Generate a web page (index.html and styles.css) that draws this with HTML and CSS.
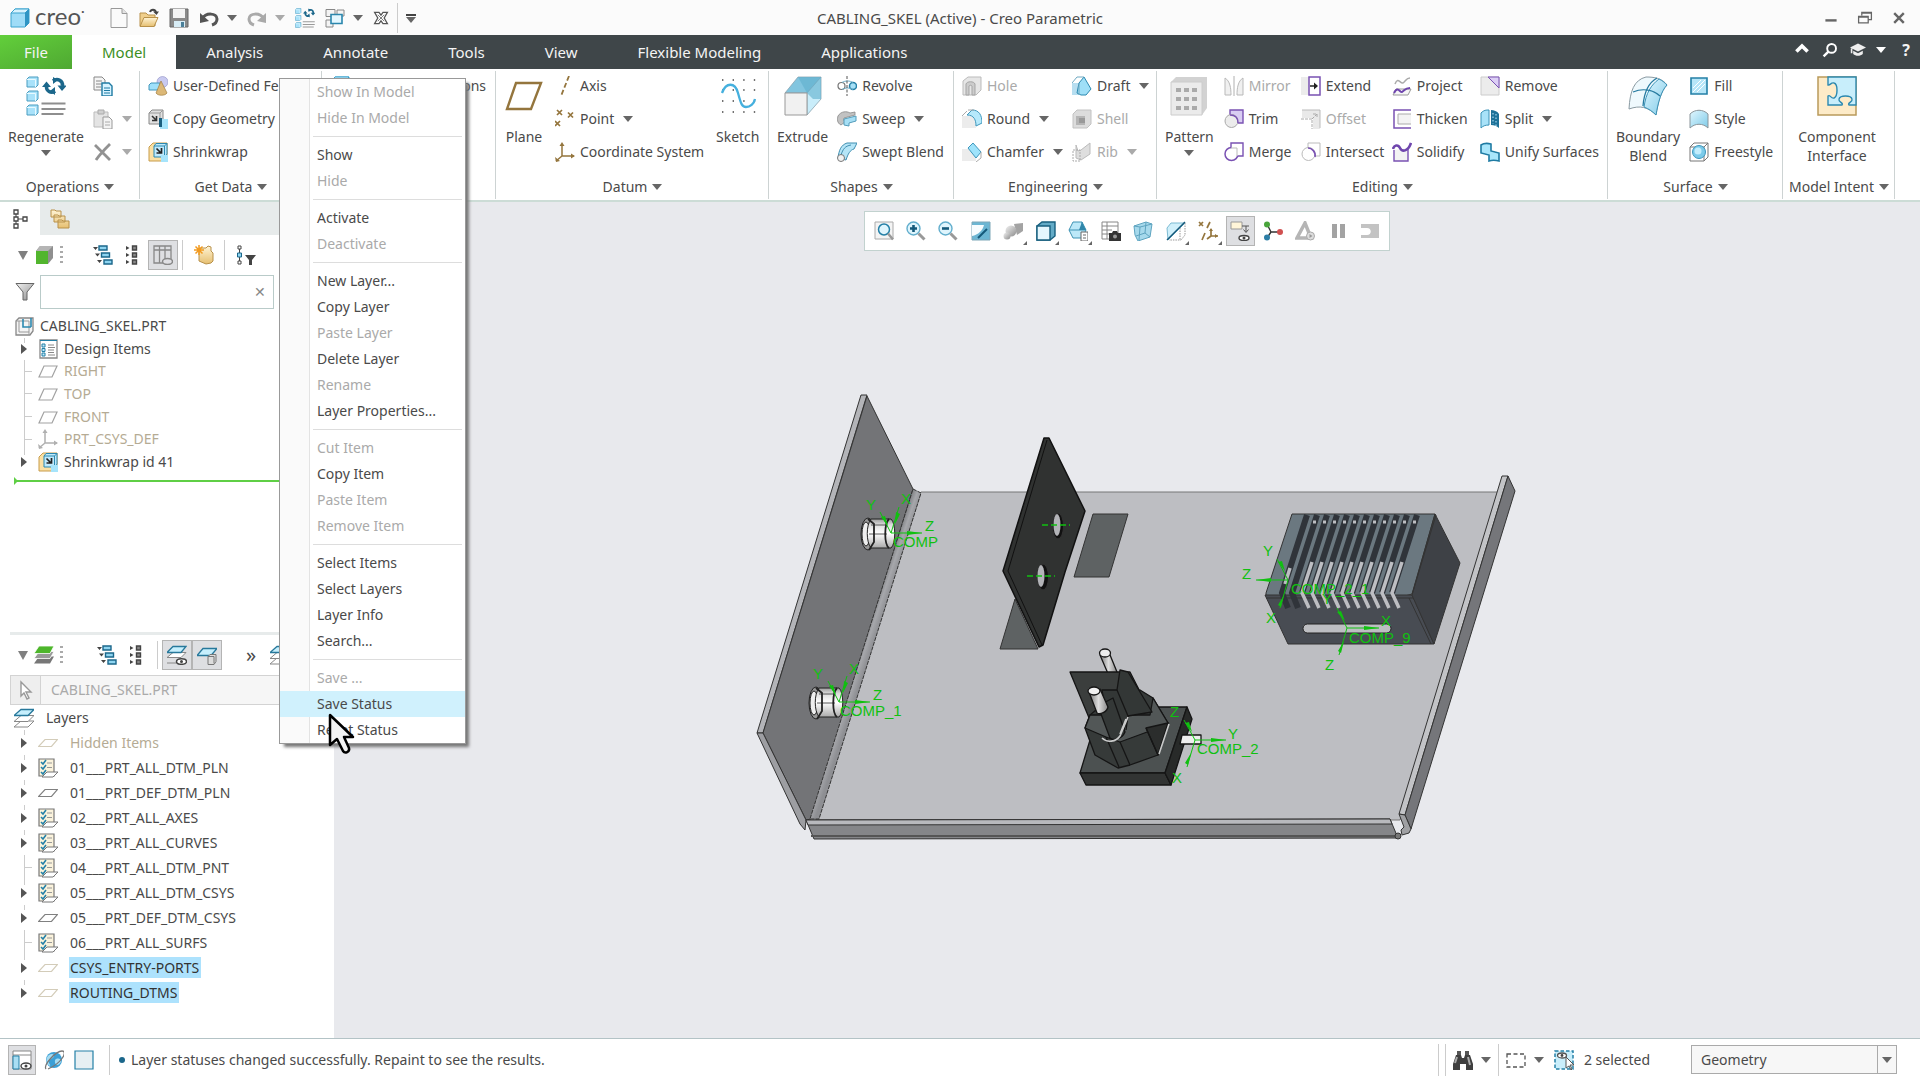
FILE: index.html
```html
<!DOCTYPE html>
<html lang="en">
<head>
<meta charset="utf-8">
<title>CABLING_SKEL (Active) - Creo Parametric</title>
<link rel="stylesheet" href="styles.css">
</head>
<body>
<svg class="sprite" aria-hidden="true">
<defs>
<linearGradient id="gb" x1="0" y1="0" x2="1" y2="1"><stop offset="0" stop-color="#e2f7ff"/><stop offset="1" stop-color="#7fcbe8"/></linearGradient>
<linearGradient id="gf" x1="0" y1="0" x2="0" y2="1"><stop offset="0" stop-color="#fff4d6"/><stop offset="1" stop-color="#e6bf70"/></linearGradient>
<linearGradient id="gg" x1="0" y1="0" x2="1" y2="1"><stop offset="0" stop-color="#f2f2f2"/><stop offset="1" stop-color="#8c8c8c"/></linearGradient>
<linearGradient id="gbend" gradientUnits="userSpaceOnUse" x1="858" y1="650" x2="870" y2="654"><stop offset="0" stop-color="#77787b"/><stop offset=".5" stop-color="#a6a7ab"/><stop offset="1" stop-color="#8e8f93"/></linearGradient>
<linearGradient id="gcyl" x1="0" y1="0" x2="0" y2="1"><stop offset="0" stop-color="#9b9b9b"/><stop offset=".2" stop-color="#ddd"/><stop offset=".5" stop-color="#fff"/><stop offset="1" stop-color="#aaa"/></linearGradient>
<linearGradient id="gpost" x1="0" y1="0" x2="1" y2="0"><stop offset="0" stop-color="#777"/><stop offset=".5" stop-color="#ddd"/><stop offset="1" stop-color="#888"/></linearGradient>
</defs>
<symbol id="cube" viewBox="0 0 20 20"><path d="M1 5 5 1h14v14l-4 4H1z" fill="#9fdcf7" stroke="#3aa3cf"/><path d="M1 5 5 1h14l-4 4z" fill="#d7f2fd" stroke="#3aa3cf"/><path d="M15 5l4-4v14l-4 4z" fill="#2f95c4"/></symbol>
<symbol id="new" viewBox="0 0 20 20"><path d="M2 .5h11l5 5v14H2z" fill="#fafafa" stroke="#999"/><path d="M13 .5v5h5" fill="#e3e3e3" stroke="#999"/></symbol>
<symbol id="open" viewBox="0 0 20 20"><path d="M1 18V5h6l2 2h7v11z" fill="#f0cf8c" stroke="#b8914a"/><path d="M1 18.500 5 9.500h14l-4 9z" fill="url(#gf)" stroke="#b8914a"/><path d="M11 4c1-3 5-3 6 0" fill="none" stroke="#444" stroke-width="2"/><path d="M14 3.500h6L17.500 7z" fill="#444"/></symbol>
<symbol id="save" viewBox="0 0 20 20"><path d="M1 1h18v18H1z" fill="#8a8a8a" stroke="#666"/><path d="M4 1h12v9H4z" fill="#f4f4f4"/><path d="M5 13h11v6H5z" fill="#d8edf6"/><path d="M12 14h3v5h-3z" fill="#4a7f99"/></symbol>
<symbol id="undo" viewBox="0 0 20 20"><path d="M3 11c4-7 15-6 15 0 0 3-2 5-5 6" fill="none" stroke="currentColor" stroke-width="3"/><path d="M1 5v10l9-2z" fill="currentColor"/></symbol>
<symbol id="redo" viewBox="0 0 20 20"><path d="M17 11C13 4 2 5 2 11c0 3 2 5 5 6" fill="none" stroke="currentColor" stroke-width="3"/><path d="M19 5v10l-9-2z" fill="currentColor"/></symbol>
<symbol id="regen" viewBox="0 0 40 40"><g fill="#a9e2fa" stroke="#4b9dc0"><path d="M1 3l2-2h9v8l-2 2H1zM1 17l2-2h9v8l-2 2H1zM1 31l2-2h9v8l-2 2H1z"/></g><path d="M1 3.500h8.500V11M1 17.500h8.500V25M1 31.500h8.500V39" fill="none" stroke="#e8faff"/><path d="M15.500 27.500h24M15.500 33h24M15.500 38h22" stroke="#8e8e8e" stroke-width="1.800"/><path d="M27 5c4-3 10-1 9.500 5M29 15c-4 3-9 0-8.500-5" fill="none" stroke="#1b678b" stroke-width="3.500"/><path d="M31.500 9.500H41L36 15zM16 11h9l-4.500-5.500zM29 19v-8l-5 4zM27 1v7l5-4z" fill="#1b678b"/></symbol>
<symbol id="wins" viewBox="0 0 20 20"><path d="M1 1.500h9v7H1zM12 2h7v6h-7zM1 12h7v7H1z" fill="#f4f4f4" stroke="#888"/><path d="M6 6.500h11v9H6z" fill="#e3f7ff" stroke="#2a86ad" stroke-width="1.600"/></symbol>
<symbol id="closew" viewBox="0 0 20 20"><path d="M2 3h5.500L10 6.500 12.500 3H18l-4 7 4 7h-5.500L10 13.500 7.500 17H2l4-7z" fill="#fff" stroke="#555" stroke-width="1.600"/><path d="M6 6l8 8M14 6l-8 8" stroke="#777" stroke-width="1.200"/></symbol>
<symbol id="copy" viewBox="0 0 20 20"><path d="M1 1h8l3 3v10H1z" fill="#f5f5f5" stroke="#888"/><path d="M3 5h6M3 8h6M3 11h5" stroke="#888"/><path d="M9 7h7l3 3v10H9z" fill="#d8f3ff" stroke="#1f7ba3" stroke-width="1.400"/><path d="M11 12h6M11 14.500h6M11 17h6" stroke="#1f7ba3"/></symbol>
<symbol id="paste" viewBox="0 0 20 20"><path d="M1 3h14v15H1z" fill="#e4e4e4" stroke="#bbb"/><path d="M5 1h6v4H5z" fill="#d0d0d0" stroke="#aaa"/><path d="M10 8h6l3 3v9h-9z" fill="#f3f3f3" stroke="#999"/><path d="M12 13h5M12 16h5" stroke="#aaa"/></symbol>
<symbol id="del" viewBox="0 0 20 20"><path d="M2 3 17 18M17 2C12 7 7 12 3 18" stroke="#929292" stroke-width="2.800" fill="none"/></symbol>
<symbol id="udf" viewBox="0 0 20 20"><circle cx="14.500" cy="6" r="5.500" fill="#c9caf0" stroke="#8d8fc4" stroke-width=".6"/><path d="M1 9l2-2h9v7H1z" fill="#9fe0fa" stroke="#4296bb"/><path d="M8 17 13 5l6 12c-2 3-9 3-11 0z" fill="#dcb877" stroke="#a07e3f" stroke-width=".7"/></symbol>
<symbol id="cgeo" viewBox="0 0 20 20"><path d="M1 4 4 1h11v11l-3 3H1z" fill="#e1e1e1" stroke="#888"/><path d="M1 4h11v11M12 4l3-3" fill="none" stroke="#999"/><path d="M4 7l4 4M8.500 7v4.500H4" stroke="#333" stroke-width="1.600" fill="none"/><path d="M12 10h8v10h-8z" fill="#a6e4fb"/><path d="M11 9h3v9h-3z" fill="#1b5f7f"/></symbol>
<symbol id="shrink" viewBox="0 0 20 20"><path d="M1 5 5 1h14v14l-3 4H1z" fill="#fae0a4" stroke="#c89c4b"/><path d="M6 4 8 1.500h11V12l-2 3H6z" fill="#bfe9fb" stroke="#2b89b0"/><path d="M6 4h10.500v11M16.500 4 19 1.500" fill="none" stroke="#2b89b0"/><path d="M8.500 6.500l4 4M13.500 6v5H8.500" stroke="#222" stroke-width="1.700" fill="none"/><path d="M13 13h7v7h-7z" fill="#a6e4fb"/></symbol>
<symbol id="plane" viewBox="0 0 40 40"><path d="M12 7h25L27 33H3z" fill="none" stroke="#94753d" stroke-width="2.400"/></symbol>
<symbol id="axis" viewBox="0 0 20 20"><path d="M14 0 6 20" stroke="#94753d" stroke-width="1.800" stroke-dasharray="5 2.500"/></symbol>
<symbol id="point" viewBox="0 0 20 20"><path d="M2 1l5 5M7 1 2 6M13 3.500l5 5M18 3.500l-5 5M0 12l5 5M5 12l-5 5" stroke="#94753d" stroke-width="1.700"/></symbol>
<symbol id="csys" viewBox="0 0 20 20"><path d="M7 2v12h12M7 14l-6 5" stroke="currentColor" stroke-width="1.500" fill="none"/><path d="M4.500 4 7 0l2.500 4zM16 11.500l4 2.500-4 2.500zM0 15l1 5 4-1z" fill="currentColor"/></symbol>
<symbol id="sketch" viewBox="0 0 40 40"><path d="M4 4h34M4 14h34M4 25h34M4 36h34" stroke="#444" stroke-width="1.400" stroke-dasharray="1.400 9.200"/><path d="M4 17C8 6 17 6 20 17s4 14 8 14 8-3 9-8" fill="none" stroke="#45b0de" stroke-width="2.300"/></symbol>
<symbol id="extrude" viewBox="0 0 40 40"><path d="M2 17 15 1h23L24 17z" fill="#82c5df" stroke="#8aa5b1" stroke-width=".8"/><path d="M24 17 38 1v22L24 39z" fill="#c9edfa" stroke="#8aa5b1" stroke-width=".8"/><path d="M15 1h23v22H30L24 17z" fill="#5fafcd" opacity=".6"/><path d="M2 17h22v22H2z" fill="#f1f1f1" stroke="#999"/></symbol>
<symbol id="revolve" viewBox="0 0 20 20"><circle cx="4.500" cy="10" r="3.500" fill="#fff" stroke="#777" stroke-width="1.200"/><circle cx="16" cy="10" r="3.500" fill="#a6e0f7" stroke="#2580a8" stroke-width="1.500"/><path d="M5 6.500c3-2 8-2 11 0M5 13.500c3-2 8-2 11 0" fill="none" stroke="#6dacc7"/><path d="M10 0v20" stroke="#555" stroke-dasharray="3 1.500"/></symbol>
<symbol id="sweep" viewBox="0 0 20 20"><path d="M1 7c3-5 9-5 12-3l5-1v3L7 9c-1 2 0 3 1 4l-4 3C0 14 0 10 1 7z" fill="#c2c2c2" stroke="#888" stroke-width=".8"/><path d="M7 10l12-3v5l-7 2v3l-5-1z" fill="#a6dff5" stroke="#549cba"/></symbol>
<symbol id="sblend" viewBox="0 0 20 20"><path d="M1 16C2 8 4 3 10 1h10L17 7c-4 1-6 5-8 11z" fill="#b5e5f7" stroke="#3f8eb0"/><path d="M4 13C6 7 8 4 14 3" stroke="#3f8eb0" fill="none"/><circle cx="4" cy="16" r="3.500" fill="#f2f2f2" stroke="#777"/></symbol>
<symbol id="hole" viewBox="0 0 20 20"><path d="M1 5 6 1h13v13l-5 5H1z" fill="#e6e6e6" stroke="#bbb"/><path d="M4 19V8c1-3 8-3 9 0v11h-3v-9c-1-1-2-1-3 0v9z" fill="#ccc" stroke="#a5a5a5"/></symbol>
<symbol id="round" viewBox="0 0 20 20"><path d="M0 7h8c4 1 6 5 6 12H0z" fill="#ececec"/><path d="M5 6c7 0 9 5 9 11l6-3C20 6 17 1 10 1z" fill="#b6e9fb" stroke="#3f97bc"/><path d="M6 1h6M0 7l5-5" stroke="#aaa"/></symbol>
<symbol id="chamfer" viewBox="0 0 20 20"><path d="M0 7h7l7 8v4H0z" fill="#ececec"/><path d="M6 6l5-5 8 9-5 6z" fill="#9fe3fb" stroke="#3f97bc"/><path d="M19 10v6l-5 4" stroke="#aaa" fill="none"/></symbol>
<symbol id="draft" viewBox="0 0 20 20"><path d="M0 7h7v12H0z" fill="#b7def0"/><path d="M7 7 12 1l7 12-5 6H9L5 17z" fill="#9fdff7" stroke="#2b89b0"/><path d="M0 7 5 1h7M7 7v12" stroke="#6fa9c1" fill="none"/></symbol>
<symbol id="shell" viewBox="0 0 20 20"><path d="M1 5 5 1h14v14l-4 4H1z" fill="#dcdcdc" stroke="#c2c2c2"/><path d="M4 7h9v9H4z" fill="#b5b5b5"/><path d="M7 9h6v5H7z" fill="#999"/></symbol>
<symbol id="rib" viewBox="0 0 20 20"><path d="M4 3v13l5 2 9-6V1l-9 7-3 1z" fill="#dedede" stroke="#bbb"/><path d="M1 8h7v11H1z" fill="none" stroke="#aaa" stroke-dasharray="2 1"/></symbol>
<symbol id="pattern" viewBox="0 0 40 40"><path d="M2 6 7 1h31v31l-5 7H2z" fill="#d2d2d2"/><path d="M2 6h31v33H2z" fill="#ebebeb" stroke="#ccc"/><g fill="#aaa"><path d="M7 12h5v4H7zM15 12h5v4h-5zM23 12h5v4h-5zM7 21h5v4H7zM15 21h5v4h-5zM23 21h5v4h-5zM7 30h5v4H7zM15 30h5v4h-5zM23 30h5v4h-5z"/></g></symbol>
<symbol id="mirror" viewBox="0 0 20 20"><path d="M1 2c5 3 6 10 6 17H1zM19 2c-5 3-6 10-6 17h6z" fill="#f0f0f0" stroke="#b9b9b9"/><path d="M10 0v20" stroke="#b0b0b0"/></symbol>
<symbol id="trim" viewBox="0 0 20 20"><path d="M6 1h13v13h-5L6 6z" fill="#d9cdf3" stroke="#7a52b3" stroke-width="1.400"/><circle cx="7.500" cy="12" r="6.500" fill="#ececec" stroke="#aaa"/><path d="M6 6c5 0 8 3 8 8" fill="none" stroke="#7a52b3" stroke-width="1.400"/></symbol>
<symbol id="merge" viewBox="0 0 20 20"><circle cx="7.500" cy="12" r="6.500" fill="#fff" stroke="#7a52b3" stroke-width="1.500"/><path d="M7 6V1h12v13h-5" fill="#fff" stroke="#7a52b3" stroke-width="1.400"/><path d="M7 6h6v8" stroke="#bbb" fill="none"/></symbol>
<symbol id="extend" viewBox="0 0 20 20"><path d="M0 1h10v18H0z" fill="#ececec"/><path d="M8 1h11v18H8z" fill="#fff" stroke="#7a52b3" stroke-width="1.500"/><path d="M9 10h6" stroke="#222" stroke-width="1.500"/><path d="M13 6.500 17 10l-4 3.500z" fill="#222"/></symbol>
<symbol id="offset" viewBox="0 0 20 20"><path d="M1 1h18v19H12V9H1z" fill="#e9e9e9"/><path d="M1 1h18v18" fill="none" stroke="#bbb"/><path d="M0 10h11v10M11 10l5-5M12 5h4v4" fill="none" stroke="#aaa" stroke-dasharray="3 1"/></symbol>
<symbol id="intersect" viewBox="0 0 20 20"><path d="M7 6V1h12v13h-5" fill="none" stroke="#bbb"/><circle cx="7.500" cy="12" r="6.500" fill="none" stroke="#bbb"/><path d="M7 6c4 0 8 4 7 9" fill="none" stroke="#7a52b3" stroke-width="1.600"/></symbol>
<symbol id="project" viewBox="0 0 20 20"><path d="M3 8c3-8 5 0 8-1 3-2 3-5 7-5" fill="none" stroke="#aaa" stroke-width="1.500"/><path d="M4 13h15l-3 6H1z" fill="#f6f6f6" stroke="#999"/><path d="M2 17c4-8 6 0 8-1 3-2 3-4 8-4" fill="none" stroke="#6f46ad" stroke-width="2"/></symbol>
<symbol id="thicken" viewBox="0 0 20 20"><path d="M19 1H2v18h17" fill="none" stroke="#7a52b3" stroke-width="1.500"/><path d="M19 5H6v10h13" fill="#f3f3f3" stroke="#aaa"/></symbol>
<symbol id="solidify" viewBox="0 0 20 20"><path d="M2 8v11h14V6" fill="#f3f3f3" stroke="#7a52b3" stroke-width="1.400"/><path d="M1 7c1-4 5-5 7-1s8 4 11-5" fill="none" stroke="#6f46ad" stroke-width="2.600"/></symbol>
<symbol id="remove" viewBox="0 0 20 20"><path d="M1 1h18v18H1z" fill="#ececec" stroke="#ccc"/><path d="M8 1h11v11z" fill="#dccff5" stroke="#7a52b3"/></symbol>
<symbol id="split" viewBox="0 0 20 20"><path d="M1 4c3-3 5-3 8-3v15c-4 0-6 1-8 3z" fill="#a9e2f8" stroke="#3a92b7"/><path d="M11 1c3 0 6 1 8 4v14c-2-2-5-3-8-3z" fill="#1d7198"/><path d="M13 4v11M16 5v12" stroke="#bdeaff" stroke-dasharray="1.500 2"/></symbol>
<symbol id="unify" viewBox="0 0 20 20"><path d="M1 3c3-2 6-2 10-1v7l8 2v8c-4-1-7-1-10 0v-6l-8-2z" fill="#a9e6fb" stroke="#1f7ba3" stroke-width="1.600"/></symbol>
<symbol id="boundary" viewBox="0 0 40 40"><path d="M1 33C2 15 6 4 18 1c8 0 16 1 21 8-6 6-9 18-11 30C20 31 12 29 1 33z" fill="#eff9fd" stroke="#8a9aa2"/><path d="M31 3c4 2 6 4 8 6-6 6-9 18-11 30-4-4-7-6-12-8C18 17 23 9 31 3z" fill="url(#gb)" stroke="#3a92b7"/><path d="M5 16c10-4 20-2 27 4M15 30C16 17 20 7 29 2" fill="none" stroke="#277ba0" stroke-width="1.300"/></symbol>
<symbol id="fill" viewBox="0 0 20 20"><path d="M2 2h16v16H2z" fill="#b7e6f8" stroke="#2480a7" stroke-width="1.600"/><path d="M4 12l8-8M4 16 16 4M8 16l8-8" stroke="#fff"/></symbol>
<symbol id="style" viewBox="0 0 20 20"><path d="M1 5C6 0 14 0 19 5v14c-5-5-13-5-18 0z" fill="url(#gb)" stroke="#8b959a"/></symbol>
<symbol id="freestyle" viewBox="0 0 20 20"><path d="M1 5h14v14H1zM5 1h14v14M1 5l4-4M15 5l4-4M15 19l4-4" fill="none" stroke="#777"/><circle cx="10" cy="10" r="6.500" fill="#7ccbea" stroke="#3b97bd"/><circle cx="9" cy="9" r="3.500" fill="#c2edfc"/></symbol>
<symbol id="compif" viewBox="0 0 40 40"><path d="M1 1h38v38H1z" fill="#fdebc8" stroke="#b99a5b" stroke-width="1.500"/><path d="M11 1h28v28h-7c-2-2 4-3 3-6-1-4-12-4-13 0-1 3 5 4 3 6H11V20c2-2 3 3 6 2 4-2 4-14 0-15-3-1-4 3-6 2z" fill="#c8eefb" stroke="#2c89b0" stroke-width="1.400"/></symbol>
<symbol id="tree" viewBox="0 0 20 20"><path d="M4 2v16M4 10h10" stroke="#444"/><path d="M2 1h4v4H2zM2 8h4v4H2zM2 15h4v4H2zM11 8h4v4h-4z" fill="#fff" stroke="#444" stroke-width="1.300"/></symbol>
<symbol id="folders" viewBox="0 0 20 20"><g fill="url(#gf)" stroke="#b8914a"><path d="M1 8V1h4l1 1h5v6zM4 13V6h4l1 1h6v6zM8 19v-8h4l1 1h6v7z"/></g></symbol>
<symbol id="gcube" viewBox="0 0 20 20"><path d="M2 6 6 1h13v12l-5 6z" fill="#8f8f8f"/><path d="M2 6h12L19 1H6z" fill="#b5b5b5"/><path d="M2 6h12v13H2z" fill="#52b52e"/></symbol>
<symbol id="expand" viewBox="0 0 20 20"><path d="M0 2h5L2.500 5zM2 8.500h5L4.500 11.500zM4 15h5l-2.500 3z" fill="#444"/><path d="M6 1h8v4H6zM8.500 8h8v4h-8zM11 15h8v4h-8z" fill="#8ed4f0" stroke="#1b678b" stroke-width="1.400"/></symbol>
<symbol id="collapse" viewBox="0 0 20 20"><path d="M4 1l3.500 2L4 5zM4 8l3.500 2L4 12zM4 15l3.500 2L4 19z" fill="#444"/><path d="M10.500 1h4v4h-4zM10.500 8h4v4h-4zM10.500 15h4v4h-4z" fill="#888" stroke="#444" stroke-width="1.400"/></symbol>
<symbol id="cols" viewBox="0 0 20 20"><path d="M1 1h17v17H1zM1 5h17M6.500 1v17M12 1v17" fill="none" stroke="#888" stroke-width="1.300"/><ellipse cx="14.500" cy="16.500" rx="5" ry="3" fill="#e0e0e4" stroke="#888" stroke-width="1.500"/></symbol>
<symbol id="newf" viewBox="0 0 20 20"><path d="M5 3h7l2-2 3 1v4l2 2v8l-2 2-5 1-7-3z" fill="url(#gf)" stroke="#b8914a"/><path d="M5 0v10M0 5h10M1.500 1.500l7 7M8.500 1.500l-7 7" stroke="#f29a1f" stroke-width="1.500"/></symbol>
<symbol id="tfilter" viewBox="0 0 20 20"><path d="M3.500 1v18" stroke="#444"/><path d="M2 1h3v3H2zM2 16h3v3H2z" fill="#fff" stroke="#444"/><path d="M1.500 8h4v4h-4z" fill="#8ed4f0" stroke="#1b678b"/><path d="M9 10h11l-4 5v5h-3v-5z" fill="#444"/></symbol>
<symbol id="funnel" viewBox="0 0 20 20"><path d="M1 1.500h18L12 10v8H8v-8z" fill="url(#gg)" stroke="#666"/></symbol>
<symbol id="part" viewBox="0 0 20 20"><path d="M2 5 5 2h14v13l-3 4H2z" fill="#f4f4f4" stroke="#888" stroke-width="1.300"/><path d="M2 5h13v14M5 5v11h10" fill="none" stroke="#999"/><path d="M9 3v8h8M17 2v9" fill="none" stroke="#2c89b0" stroke-width="1.600"/></symbol>
<symbol id="design" viewBox="0 0 20 20"><path d="M2 1h17v18H2z" fill="#fff" stroke="#888" stroke-width="1.300"/><path d="M4 5h3v3H4zM4 9.500h3v3H4zM4 14h3v3H4z" fill="#bfe9fb" stroke="#2480a7"/><path d="M10 6h6M10 8.500h7M10 11h6M10 13.500h6M10 16h7" stroke="#888"/><path d="M2 1.500h17" stroke="#2480a7"/></symbol>
<symbol id="pl" viewBox="0 0 20 20"><path d="M6 5h13l-5 11H1z" fill="none" stroke="#a2a2a2" stroke-width="1.200"/></symbol>
<symbol id="lay" viewBox="0 0 20 20"><path d="M7 6.500h12.500l-6 7H.5z" fill="#fff" stroke="currentColor" stroke-width="1.200"/></symbol>
<symbol id="rule" viewBox="0 0 20 20"><path d="M1 1h15v17H1z" fill="#fbf3dc" stroke="#777" stroke-width="1.200"/><path d="M3 4l2 2 3-4M3 9l2 2 3-4M3 14l2 2 3-4" fill="none" stroke="#2480a7" stroke-width="1.600"/><path d="M9 5h5M9 9.500h5" stroke="#999"/><path d="M9 14h11l-5 5H4z" fill="#fff" stroke="#777"/></symbol>
<symbol id="layers" viewBox="0 0 20 20"><path d="M7 13h13l-6 6H0z" fill="#fff" stroke="#888"/><path d="M7 7.500h13l-6 6H0z" fill="#fff" stroke="#888"/><path d="M7 1.500h13l-6 6H0z" fill="#c6effd" stroke="#27789b" stroke-width="1.300"/></symbol>
<symbol id="glayers" viewBox="0 0 20 20"><path d="M5 11.500h15l-4 7H0z" fill="#777"/><path d="M5 6.500h15l-4 7H0z" fill="#999" stroke="#fff" stroke-width=".8"/><path d="M5 1h15l-4 7.500H0z" fill="#4db62b" stroke="#fff" stroke-width=".8"/></symbol>
<symbol id="layeye" viewBox="0 0 20 20"><path d="M6 7.500h13l-5 5H0zM0 18h9" fill="#fff" stroke="#888"/><path d="M6 1.500h13l-5 6H0z" fill="#c6effd" stroke="#27789b" stroke-width="1.300"/><ellipse cx="14.500" cy="16.500" rx="5" ry="2.800" fill="#fff" stroke="#444" stroke-width="1.500"/><circle cx="14.500" cy="16.500" r="1.500" fill="#444"/></symbol>
<symbol id="laybox" viewBox="0 0 20 20"><path d="M6 3.500h14l-6 7H0z" fill="#c6effd" stroke="#27789b" stroke-width="1.300"/><path d="M11 11.500l2-2h6v7l-2 3h-6zM11 11.500h6v7" fill="#ddd" stroke="#777"/></symbol>
<symbol id="arrow" viewBox="0 0 20 20"><path d="M6 2v14l3-3 3 6 2-1-3-6h5z" fill="#fff" stroke="#999" stroke-width="1.400"/></symbol>
<symbol id="refit" viewBox="0 0 20 20"><path d="M1 1h18v17H1z" fill="#f4f4f4" stroke="#aaa"/><circle cx="10" cy="8.500" r="5.500" fill="#dff5fd" stroke="#2480a7" stroke-width="1.500"/><path d="M14 12.500l5 6" stroke="#999" stroke-width="2.500"/></symbol>
<symbol id="zin" viewBox="0 0 20 20"><circle cx="7.500" cy="7.500" r="6.500" fill="#dff5fd" stroke="#62aecd" stroke-width="1.400"/><path d="M7.500 4v7M4 7.500h7" stroke="#155a7b" stroke-width="2.600"/><path d="M12.500 12.500l6 6" stroke="#999" stroke-width="3"/></symbol>
<symbol id="zout" viewBox="0 0 20 20"><circle cx="7.500" cy="7.500" r="6.500" fill="#dff5fd" stroke="#62aecd" stroke-width="1.400"/><path d="M4 7.500h7" stroke="#155a7b" stroke-width="2.600"/><path d="M12.500 12.500l6 6" stroke="#999" stroke-width="3"/></symbol>
<symbol id="repaint" viewBox="0 0 20 20"><path d="M1 1h18v18H1z" fill="#6cb6d3" stroke="#7ea7b8"/><path d="M1 4h12c-1 5-6 10-12 11z" fill="#f7fcfe"/><path d="M7 17 16 8" stroke="#15597a" stroke-width="2"/></symbol>
<symbol id="shade" viewBox="0 0 20 20"><path d="M11 3l9-1v8l-6 4z" fill="#a3a3a3"/><circle cx="8" cy="10" r="5.500" fill="url(#gg)"/><circle cx="4" cy="15" r="3.500" fill="url(#gg)"/></symbol>
<symbol id="wire" viewBox="0 0 20 20"><path d="M1 5 6 1h13v14l-5 4H1z" fill="#63abc7" stroke="#18607f" stroke-width="1.400"/><path d="M1 5h13v14H1z" fill="#e5f7fe" stroke="#18607f" stroke-width="1.400"/></symbol>
<symbol id="views" viewBox="0 0 20 20"><path d="M5 1h9l4 8-4 8H5L1 9z" fill="#bce8f8" stroke="#3f93b4"/><path d="M1 9h17M14 1v8" stroke="#3f93b4"/><path d="M14 1l4 8h-7z" fill="#2f86aa"/><path d="M13 11h7v9h-7z" fill="#fff" stroke="#666"/><path d="M15 14h3M15 17h3" stroke="#666"/></symbol>
<symbol id="vmgr" viewBox="0 0 20 20"><path d="M1 1h16v17H1zM1 5h16M1 9h10M1 13h8M6 1v17" fill="#fff" stroke="#888"/><path d="M8 12h3l1-2h4l1 2h3v8H8z" fill="#333"/><circle cx="14" cy="15.500" r="2" fill="#999"/></symbol>
<symbol id="persp" viewBox="0 0 20 20"><path d="M1 5l12-4 6 2-2 13-12 4-3-6z" fill="#a6d9ec" stroke="#5ea4c0"/><path d="M1 5l6 1 12-3M7 6l-1 13M13 1l-1 11 5 4M12 12l-9 3" fill="none" stroke="#5ea4c0"/></symbol>
<symbol id="sect" viewBox="0 0 20 20"><path d="M1 7 5 2h14L2 19z" fill="#d0f0fb" stroke="#7dbbd3"/><path d="M19 2v12l-4 5H3M14 7v12" fill="none" stroke="#999" stroke-dasharray="1.500 1"/><path d="M1 19 19 1" stroke="#15597a" stroke-width="1.400"/></symbol>
<symbol id="datums" viewBox="0 0 20 20"><path d="M1 1l4 4M5 1 1 5M12 1 9 7M7 12 4 19M13 8v7h7M13 15l-4 3" stroke="#94753d" stroke-width="1.700" fill="none"/><path d="M11 10l2-3 2 3zM17 13l3 2-3 2z" fill="#94753d"/></symbol>
<symbol id="annot" viewBox="0 0 20 20"><path d="M1 1h11v7H1z" fill="#fff5d8" stroke="#999"/><path d="M12 5h7M16 5v6M13.500 8.500l2.500 3 2.500-3" stroke="#555" fill="none"/><ellipse cx="14" cy="17" rx="5" ry="2.500" fill="#fff" stroke="#444" stroke-width="1.400"/><circle cx="14" cy="17" r="1.500" fill="#444"/></symbol>
<symbol id="spin" viewBox="0 0 20 20"><path d="M4 3l4 8M4 17l4-6h9" stroke="#333" stroke-width="1.400" fill="none"/><circle cx="4" cy="3.500" r="3" fill="#49a53b"/><circle cx="4" cy="16.500" r="3" fill="#2c7ea6"/><circle cx="17" cy="11" r="3" fill="#d05050"/></symbol>
<symbol id="sim" viewBox="0 0 20 20"><path d="M10 2 2 17h14z" fill="none" stroke="#b5b5b5" stroke-width="3.500"/><circle cx="15.500" cy="15" r="4" fill="#ddd" stroke="#aaa"/><path d="M14.500 13l3 2-3 2z" fill="#999"/></symbol>
<symbol id="pause" viewBox="0 0 20 20"><path d="M4 3h5v14H4zM12 3h5v14h-5z" fill="#a3a3a3"/></symbol>
<symbol id="stop" viewBox="0 0 20 20"><path d="M1 3h18v14H1v-3h6c5 0 5-7 0-7H1z" fill="#c3c3c3"/></symbol>
<symbol id="nav" viewBox="0 0 20 20"><path d="M1 1h18v18H1zM1 5h18" fill="#fff" stroke="#888"/><path d="M1 6h6v13H1z" fill="#a9def3" stroke="#2480a7"/><ellipse cx="14" cy="16" rx="5" ry="3" fill="#fff" stroke="#444" stroke-width="1.400"/><circle cx="14" cy="16" r="1.500" fill="#444"/></symbol>
<symbol id="globe" viewBox="0 0 20 20"><circle cx="10" cy="10" r="8" fill="#3b9fd6"/><path d="M5 5c3-2 5-1 5 1S6 9 5 11s2 4 1 5C2 14 1 8 5 5zM12 9c3-1 5 0 5 2s-2 4-4 4-3-5-1-6z" fill="#a5dcf2"/><path d="M2 19C-1 15 12 1 18 1s0 12-14 18" fill="none" stroke="#777" stroke-width="1.300"/></symbol>
<symbol id="blank" viewBox="0 0 20 20"><path d="M1 1h18v18H1z" fill="#e6eff3" stroke="#2480a7" stroke-width="1.200"/></symbol>
<symbol id="bino" viewBox="0 0 20 20"><path d="M4 1h4v4H4zM12 1h4v4h-4z" fill="#555"/><path d="M3 5h5l1 3h2l1-3h5l3 9v6h-7v-6H7v6H0v-6z" fill="#3f3f3f"/><path d="M2 13l2-6M15 7l2 8" stroke="#aaa" stroke-width="2"/></symbol>
<symbol id="dash" viewBox="0 0 20 20"><path d="M1 4h18v13H1z" fill="none" stroke="#555" stroke-width="1.300" stroke-dasharray="4 2.500"/></symbol>
<symbol id="pick" viewBox="0 0 20 20"><path d="M1 1h18v18H1z" fill="#c9eefb" stroke="#2480a7" stroke-width="1.500" stroke-dasharray="3.500 2"/><ellipse cx="8" cy="5.500" rx="4.500" ry="2.500" fill="#fff" stroke="#555" stroke-width="1.300"/><circle cx="8" cy="5.500" r="1.400" fill="#444"/><path d="M12 7v11l3-2 2 4 1-1-2-4h4z" fill="#fff" stroke="#555"/></symbol>
<symbol id="srch" viewBox="0 0 20 20"><circle cx="12" cy="8" r="5.500" fill="none" stroke="#fff" stroke-width="2.400"/><path d="M8 12l-6 6" stroke="#fff" stroke-width="3"/></symbol>
<symbol id="hat" viewBox="0 0 20 20"><path d="M0 7l10-5 10 5-10 5zM4 11l6 3 6-3v4c-3 3-9 3-12 0zM1 8h2v6H1z" fill="#eee"/></symbol>
<symbol id="up" viewBox="0 0 20 20"><path d="M3 12l7-7 7 7" fill="none" stroke="#fff" stroke-width="4.500"/></symbol>
<symbol id="min" viewBox="0 0 20 20"><path d="M3 13h14" stroke="#666" stroke-width="3"/></symbol>
<symbol id="rest" viewBox="0 0 20 20"><path d="M2 8h12v8H2zM6 7V3h12v9h-4M2 9h12M6 4h12" fill="none" stroke="#666" stroke-width="1.600"/></symbol>
<symbol id="cls" viewBox="0 0 20 20"><path d="M4 4l12 12M16 4 4 16" stroke="#666" stroke-width="3"/></symbol>
</svg>

<header class="titlebar">
  <svg class="i logo-cube"><use href="#cube"/></svg>
  <span class="logo">creo<sup>·</sup></span>
  <div class="quick">
    <button class="qb" aria-label="New"><svg class="i"><use href="#new"/></svg></button>
    <button class="qb" aria-label="Open"><svg class="i"><use href="#open"/></svg></button>
    <button class="qb" aria-label="Save"><svg class="i"><use href="#save"/></svg></button>
    <button class="qb split" aria-label="Undo"><svg class="i"><use href="#undo"/></svg><span class="caret"></span></button>
    <button class="qb split off" aria-label="Redo"><svg class="i"><use href="#redo"/></svg><span class="caret"></span></button>
    <button class="qb" aria-label="Regenerate model"><svg class="i"><use href="#regen"/></svg></button>
    <button class="qb split" aria-label="Windows"><svg class="i"><use href="#wins"/></svg><span class="caret"></span></button>
    <button class="qb" aria-label="Close window"><svg class="i small"><use href="#closew"/></svg></button>
    <button class="qb custom" aria-label="Customize toolbar"><span class="caret barred"></span></button>
  </div>
  <h1 class="title">CABLING_SKEL (Active) - Creo Parametric</h1>
  <div class="winctl">
    <button aria-label="Minimize"><svg class="i small"><use href="#min"/></svg></button>
    <button aria-label="Restore"><svg class="i small"><use href="#rest"/></svg></button>
    <button aria-label="Close"><svg class="i small"><use href="#cls"/></svg></button>
  </div>
</header>

<nav class="tabs">
  <button class="tab file">File</button>
  <button class="tab active">Model</button>
  <button class="tab">Analysis</button>
  <button class="tab">Annotate</button>
  <button class="tab">Tools</button>
  <button class="tab">View</button>
  <button class="tab">Flexible Modeling</button>
  <button class="tab">Applications</button>
  <div class="tabtools">
    <button aria-label="Collapse ribbon"><svg class="i small"><use href="#up"/></svg></button>
    <button aria-label="Search"><svg class="i small"><use href="#srch"/></svg></button>
    <button class="learn" aria-label="Learning"><svg class="i small"><use href="#hat"/></svg><span class="caret"></span></button>
    <button class="help" aria-label="Help">?</button>
  </div>
</nav>

<section class="ribbon">
  <div class="group g-ops">
    <div class="cols">
      <button class="big"><svg class="i40"><use href="#regen"/></svg><span>Regenerate</span><span class="caret"></span></button>
      <div class="col">
        <button class="cmd" aria-label="Copy"><svg class="i"><use href="#copy"/></svg></button>
        <button class="cmd off" aria-label="Paste"><svg class="i"><use href="#paste"/></svg><span class="caret"></span></button>
        <button class="cmd off" aria-label="Delete"><svg class="i"><use href="#del"/></svg><span class="caret"></span></button>
      </div>
    </div>
    <button class="glabel">Operations<span class="caret"></span></button>
  </div>
  <div class="group g-data">
    <div class="cols">
      <div class="col">
        <button class="cmd"><svg class="i"><use href="#udf"/></svg>User-Defined Fe</button>
        <button class="cmd"><svg class="i"><use href="#cgeo"/></svg>Copy Geometry</button>
        <button class="cmd"><svg class="i"><use href="#shrink"/></svg>Shrinkwrap</button>
      </div>
    </div>
    <button class="glabel">Get Data<span class="caret"></span></button>
  </div>
  <div class="group g-body">
    <div class="cols">
      <div class="col">
        <button class="cmd"><svg class="i"><use href="#cube"/></svg>Boolean Operations</button>
      </div>
    </div>
  </div>
  <div class="group g-datum">
    <div class="cols">
      <button class="big"><svg class="i40"><use href="#plane"/></svg><span>Plane</span></button>
      <div class="col c-datum">
        <button class="cmd"><svg class="i"><use href="#axis"/></svg>Axis</button>
        <button class="cmd"><svg class="i"><use href="#point"/></svg>Point<span class="caret"></span></button>
        <button class="cmd"><svg class="i tan"><use href="#csys"/></svg>Coordinate System</button>
      </div>
      <button class="big"><svg class="i40"><use href="#sketch"/></svg><span>Sketch</span></button>
    </div>
    <button class="glabel">Datum<span class="caret"></span></button>
  </div>
  <div class="group g-shapes">
    <div class="cols">
      <button class="big"><svg class="i40"><use href="#extrude"/></svg><span>Extrude</span></button>
      <div class="col">
        <button class="cmd"><svg class="i"><use href="#revolve"/></svg>Revolve</button>
        <button class="cmd"><svg class="i"><use href="#sweep"/></svg>Sweep<span class="caret"></span></button>
        <button class="cmd"><svg class="i"><use href="#sblend"/></svg>Swept Blend</button>
      </div>
    </div>
    <button class="glabel">Shapes<span class="caret"></span></button>
  </div>
  <div class="group g-eng">
    <div class="cols">
      <div class="col c-eng">
        <button class="cmd off"><svg class="i"><use href="#hole"/></svg>Hole</button>
        <button class="cmd"><svg class="i"><use href="#round"/></svg>Round<span class="caret"></span></button>
        <button class="cmd"><svg class="i"><use href="#chamfer"/></svg>Chamfer<span class="caret"></span></button>
      </div>
      <div class="col">
        <button class="cmd"><svg class="i"><use href="#draft"/></svg>Draft<span class="caret"></span></button>
        <button class="cmd off"><svg class="i"><use href="#shell"/></svg>Shell</button>
        <button class="cmd off"><svg class="i"><use href="#rib"/></svg>Rib<span class="caret"></span></button>
      </div>
    </div>
    <button class="glabel">Engineering<span class="caret"></span></button>
  </div>
  <div class="group g-edit">
    <div class="cols">
      <button class="big"><svg class="i40"><use href="#pattern"/></svg><span>Pattern</span><span class="caret"></span></button>
      <div class="col c-e1">
        <button class="cmd off"><svg class="i"><use href="#mirror"/></svg>Mirror</button>
        <button class="cmd"><svg class="i"><use href="#trim"/></svg>Trim</button>
        <button class="cmd"><svg class="i"><use href="#merge"/></svg>Merge</button>
      </div>
      <div class="col c-e2">
        <button class="cmd"><svg class="i"><use href="#extend"/></svg>Extend</button>
        <button class="cmd off"><svg class="i"><use href="#offset"/></svg>Offset</button>
        <button class="cmd"><svg class="i"><use href="#intersect"/></svg>Intersect</button>
      </div>
      <div class="col c-e3">
        <button class="cmd"><svg class="i"><use href="#project"/></svg>Project</button>
        <button class="cmd"><svg class="i"><use href="#thicken"/></svg>Thicken</button>
        <button class="cmd"><svg class="i"><use href="#solidify"/></svg>Solidify</button>
      </div>
      <div class="col">
        <button class="cmd"><svg class="i"><use href="#remove"/></svg>Remove</button>
        <button class="cmd"><svg class="i"><use href="#split"/></svg>Split<span class="caret"></span></button>
        <button class="cmd"><svg class="i"><use href="#unify"/></svg>Unify Surfaces</button>
      </div>
    </div>
    <button class="glabel">Editing<span class="caret"></span></button>
  </div>
  <div class="group g-surf">
    <div class="cols">
      <button class="big"><svg class="i40"><use href="#boundary"/></svg><span>Boundary<br>Blend</span></button>
      <div class="col">
        <button class="cmd"><svg class="i"><use href="#fill"/></svg>Fill</button>
        <button class="cmd"><svg class="i"><use href="#style"/></svg>Style</button>
        <button class="cmd"><svg class="i"><use href="#freestyle"/></svg>Freestyle</button>
      </div>
    </div>
    <button class="glabel">Surface<span class="caret"></span></button>
  </div>
  <div class="group g-int">
    <div class="cols">
      <button class="big"><svg class="i40"><use href="#compif"/></svg><span>Component<br>Interface</span></button>
    </div>
    <button class="glabel">Model Intent<span class="caret"></span></button>
  </div>
</section>

<main class="work">
  <aside class="side">
    <div class="sidetabs">
      <button class="stab on" aria-label="Model tree"><svg class="i"><use href="#tree"/></svg></button>
      <button class="stab" aria-label="Folder browser"><svg class="i"><use href="#folders"/></svg></button>
    </div>
    <div class="tbar">
      <span class="caret large"></span><svg class="i cubeicon"><use href="#gcube"/></svg><span class="dots"></span>
      <button class="tb first" aria-label="Expand tree"><svg class="i"><use href="#expand"/></svg></button>
      <button class="tb" aria-label="Collapse tree"><svg class="i"><use href="#collapse"/></svg></button>
      <button class="tb pressed" aria-label="Tree columns"><svg class="i"><use href="#cols"/></svg></button>
      <button class="tb ruled" aria-label="New group"><svg class="i"><use href="#newf"/></svg></button>
      <button class="tb ruled" aria-label="Tree filters"><svg class="i"><use href="#tfilter"/></svg></button>
    </div>
    <div class="filter">
      <label for="flt" aria-label="Filter"><svg class="i"><use href="#funnel"/></svg></label>
      <div class="fbox"><input id="flt" type="text"><button aria-label="Clear filter">✕</button></div>
    </div>
    <ul class="tree model">
      <li class="root"><svg class="i"><use href="#part"/></svg>CABLING_SKEL.PRT</li>
      <li><span class="node more"></span><svg class="i"><use href="#design"/></svg>Design Items</li>
      <li class="hid"><span class="node"></span><svg class="i"><use href="#pl"/></svg>RIGHT</li>
      <li class="hid"><span class="node"></span><svg class="i"><use href="#pl"/></svg>TOP</li>
      <li class="hid"><span class="node"></span><svg class="i"><use href="#pl"/></svg>FRONT</li>
      <li class="hid"><span class="node"></span><svg class="i grey"><use href="#csys"/></svg>PRT_CSYS_DEF</li>
      <li><span class="node more"></span><svg class="i"><use href="#shrink"/></svg>Shrinkwrap id 41</li>
    </ul>
    <div class="insert"></div>
    <section class="layerpane">
      <div class="tbar">
        <span class="caret large"></span><svg class="i cubeicon"><use href="#glayers"/></svg><span class="dots"></span>
        <button class="tb first" aria-label="Expand layers"><svg class="i"><use href="#expand"/></svg></button>
        <button class="tb" aria-label="Collapse layers"><svg class="i"><use href="#collapse"/></svg></button>
        <button class="tb ruled pressed" aria-label="Show layers"><svg class="i"><use href="#layeye"/></svg></button>
        <button class="tb pressed" aria-label="Isolate layers"><svg class="i"><use href="#laybox"/></svg></button>
        <button class="chev" aria-label="More">»</button>
        <button class="tb" aria-label="Layer options"><svg class="i"><use href="#layers"/></svg></button>
      </div>
      <div class="active-obj">
        <button aria-label="Select object"><svg class="i"><use href="#arrow"/></svg></button>
        <input type="text" value="CABLING_SKEL.PRT" aria-label="Active object" disabled>
      </div>
      <ul class="tree lay">
        <li class="root"><svg class="i"><use href="#layers"/></svg>Layers</li>
        <li class="hid"><span class="node more"></span><svg class="i tanl"><use href="#lay"/></svg>Hidden Items</li>
        <li><span class="node more"></span><svg class="i"><use href="#rule"/></svg>01___PRT_ALL_DTM_PLN</li>
        <li><span class="node more"></span><svg class="i darkl"><use href="#lay"/></svg>01___PRT_DEF_DTM_PLN</li>
        <li><span class="node more"></span><svg class="i"><use href="#rule"/></svg>02___PRT_ALL_AXES</li>
        <li><span class="node more"></span><svg class="i"><use href="#rule"/></svg>03___PRT_ALL_CURVES</li>
        <li><span class="node"></span><svg class="i"><use href="#rule"/></svg>04___PRT_ALL_DTM_PNT</li>
        <li><span class="node more"></span><svg class="i"><use href="#rule"/></svg>05___PRT_ALL_DTM_CSYS</li>
        <li><span class="node more"></span><svg class="i darkl"><use href="#lay"/></svg>05___PRT_DEF_DTM_CSYS</li>
        <li><span class="node"></span><svg class="i"><use href="#rule"/></svg>06___PRT_ALL_SURFS</li>
        <li><span class="node more"></span><svg class="i tanl"><use href="#lay"/></svg><mark>CSYS_ENTRY-PORTS</mark></li>
        <li><span class="node more"></span><svg class="i tanl"><use href="#lay"/></svg><mark>ROUTING_DTMS</mark></li>
      </ul>
    </section>
  </aside>

  <section class="view">
    <svg class="scene" viewBox="334 202 1586 836" role="img" aria-label="Cabling skeleton model">
      <defs>
        <g id="conn" stroke="#222" stroke-width="1">
          <ellipse cx="868" cy="534" rx="7" ry="16" fill="#999"/>
          <ellipse cx="866" cy="534" rx="4" ry="12" fill="#eee"/>
          <path d="M871 519h20c5 4 5 25 0 29h-20c-5-6-5-23 0-29z" fill="url(#gcyl)"/>
          <path d="M869 534h18M871 525h16" fill="none" stroke="#555"/>
          <path d="M889 519c-5 5-5 25 0 29M868 519l6 5v18l-5 8" fill="none" stroke-width="1.800"/>
        </g>
        <g id="tri" stroke="#10c010" fill="#10c010">
          <path d="M891 533l-11-21M891 533l8-26M891 533h31" fill="none"/>
          <path d="M881 517l4-1 3 10zM895 524l1-12 4 2zM907 531l15 2-15 2z" stroke="none"/>
        </g>
      </defs>
      <g stroke="#333" stroke-width="1" stroke-linejoin="round">
        <path d="M921 492H1498L1400 820H816z" fill="#bdbec2" stroke="#777"/>
        <path d="M861 395h6L763 733l-6 0z" fill="#b3b4b8"/>
        <path d="M867 396 913 489 811 819 806 820 763 733z" fill="#737477"/>
        <path d="M757 733h6l43 87-1 10-5-6z" fill="#9d9ea2"/>
        <path d="M913 489l8 4L819 819h-9z" fill="url(#gbend)" stroke-dasharray="4 1"/>
        <path d="M806 820l584-1 8 19-584 1z" fill="#858689"/>
        <path d="M806 820l584-1 2 5-584 1z" fill="#b8b9bd"/>
        <path d="M811 836h584" stroke="#555" stroke-width="2"/>
        <path d="M1502 476h6l-103 339-6-1z" fill="#c2c3c6"/>
        <path d="M1508 476l7 15-104 338-6-14z" fill="#75767a"/>
        <path d="M1399 814l6 1 6 14-2 4-7 2-1-5 3-3z" fill="#9fa0a3"/>
        <circle cx="1398" cy="836" r="3" fill="#777"/>
        <!-- bracket plate -->
        <path d="M1015 599l-15 50h38z" fill="#5e6263"/>
        <path d="M1093 514h35l-19 63h-35z" fill="#5e6263"/>
        <path d="M1044 438h5l36 73-20 61-3 10-19 63-4 2-36-76z" fill="#303231" stroke="#111" stroke-width="1.500"/>
        <path d="M1047 440l-39 131 34 74" fill="none" stroke="#111"/>
        <ellipse cx="1058" cy="526" rx="5.500" ry="13" fill="#111"/><ellipse cx="1057" cy="525" rx="3.500" ry="11" fill="#b3b4b8" stroke="none"/>
        <ellipse cx="1043" cy="577" rx="5.500" ry="13" fill="#111"/><ellipse cx="1041" cy="576" rx="3.500" ry="11" fill="#b3b4b8" stroke="none"/>
        <!-- finned housing -->
        <path d="M1292 514h143l-23 80-7 2h-139v-3z" fill="#6b7880"/>
        <path d="M1265 595h147l22 49h-146z" fill="#484c53"/>
        <path d="M1435 514l25 49-26 81-22-49z" fill="#3e4146"/>
        <path d="M1412 595l24-80M1409 598l22 46M1266 598h147" fill="none"/>
      </g>
      <g fill="none" stroke-width="6" stroke="#30343a">
        <path d="M1307 515l-25 78 6 15M1317 515l-25 78 6 15M1327 515l-25 78M1337 515l-25 78M1347 515l-25 78M1357 515l-25 78M1367 515l-25 78M1377 515l-25 78M1387 515l-25 78M1397 515l-25 78M1407 515l-25 78M1417 515l-25 78"/>
      </g>
      <g fill="none" stroke-width="3.500" stroke="#bdbec2">
        <path d="M1312 562l-10 31 7 15M1322 562l-10 31 7 15M1332 562l-10 31 7 15M1342 562l-10 31 7 15M1352 562l-10 31 7 15M1362 562l-10 31 7 15M1372 562l-10 31 7 15M1382 562l-10 31 7 15M1392 562l-10 31 7 15M1402 562l-10 31 7 15"/>
        <path d="M1290 568l-5 16"/>
        <path d="M1313 522h104" stroke-dasharray="3 7" stroke-width="3"/>
      </g>
      <rect x="1303" y="624" width="88" height="9" rx="4.500" fill="#bdbec2" stroke="#222"/>
      <!-- relay -->
      <g stroke="#151515" stroke-width="1.300" stroke-linejoin="round">
        <path d="M1100 655l8-5 9 22-8 4z" fill="url(#gpost)"/><ellipse cx="1105" cy="653" rx="5.500" ry="4" fill="#eee"/>
        <path d="M1070 672h60l27 53h-65z" fill="#3b3e3d"/>
        <path d="M1100 707h87l-22 66h-85z" fill="#4c5151"/>
        <path d="M1080 773h85l6 12h-85z" fill="#323433"/>
        <path d="M1187 707l5 12-21 66-6-12z" fill="#282a29"/>
        <path d="M1085 728l5-13 12-10 38-15 13 8 15 25-10 32-28 10-12 3-23-13z" fill="#363a39"/>
        <path d="M1085 728l5-13h60l3-17 15 25-10 5-38 14-14-5z" fill="#525757"/>
        <path d="M1146 728l22-5-10 32-12-27z" fill="#2b2d2c"/>
        <path d="M1102 690h15l3-20 8 2 24 40-24 4-4 14-14 8z" fill="#333736"/>
        <path d="M1117 690l11 26M1120 742l10 23M1106 737l13 30M1146 728l12 27M1128 716l-2 14" fill="none"/>
        <path d="M1098 706l12 32c4 3 12 1 15-6l-12-34z" fill="#343837"/>
        <path d="M1089 692l11-3 8 18c-1 5-8 8-11 6z" fill="url(#gpost)"/><ellipse cx="1094" cy="691" rx="6" ry="4" fill="#f1f1f1"/>
        <path d="M1102 738c5 5 14 4 18-2l8-19M1159 754l10-30M1120 734l6-15" fill="none" stroke="#c9caca" stroke-width="1.600"/>
        <path d="M1182 735h19v9h-21z" fill="#eee"/>
      </g>
      <use href="#conn"/><use href="#conn" x="-52" y="169"/>
      <use href="#tri"/><use href="#tri" x="-52" y="169"/>
      <g fill="none" stroke="#10c010">
        <path d="M1042 525h28M1027 576h28" stroke-dasharray="6 3" stroke-width="1.500"/>
        <path d="M1288 580h-32M1288 580l-11-21M1288 580l-8 28M1347 628h32M1347 628l-10-20M1347 628l-8 27M1195 740h31M1195 740l-11-20M1195 740l-8 27"/>
      </g>
      <path d="M1256 580l15-2v4zM1278 562l4-1 3 10zM1284 595l-3 12-3-2zM1379 628l-15-2v4zM1337 612l4-1 4 10zM1344 641l-3 12-3-2zM1226 740l-15-2v4zM1185 723l4-1 3 10zM1191 753l-3 12-3-2z" fill="#10c010"/>
      <g class="cs">
        <text x="866" y="510">Y</text><text x="901" y="504">X</text><text x="925" y="531">Z</text><text x="893" y="547">COMP</text>
        <text x="813" y="679">Y</text><text x="849" y="674">X</text><text x="873" y="700">Z</text><text x="840" y="716">COMP_1</text>
        <text x="1263" y="556">Y</text><text x="1242" y="579">Z</text><text x="1266" y="623">X</text><text x="1291" y="594">COMP_2_1</text>
        <text x="1322" y="604">Y</text><text x="1381" y="626">X</text><text x="1325" y="670">Z</text><text x="1349" y="643">COMP_9</text>
        <text x="1170" y="717">Z</text><text x="1228" y="739">Y</text><text x="1172" y="783">X</text><text x="1197" y="754">COMP_2</text>
      </g>
    </svg>
    <div class="vtools" role="toolbar">
      <button aria-label="Refit"><svg class="i"><use href="#refit"/></svg></button>
      <button aria-label="Zoom in"><svg class="i"><use href="#zin"/></svg></button>
      <button aria-label="Zoom out"><svg class="i"><use href="#zout"/></svg></button>
      <button aria-label="Repaint"><svg class="i"><use href="#repaint"/></svg></button>
      <button class="drop" aria-label="Rendering"><svg class="i"><use href="#shade"/></svg></button>
      <button class="drop" aria-label="Display style"><svg class="i"><use href="#wire"/></svg></button>
      <button class="drop" aria-label="Saved orientations"><svg class="i"><use href="#views"/></svg></button>
      <button aria-label="View manager"><svg class="i"><use href="#vmgr"/></svg></button>
      <button aria-label="Perspective"><svg class="i"><use href="#persp"/></svg></button>
      <button class="drop" aria-label="Sections"><svg class="i"><use href="#sect"/></svg></button>
      <button class="drop" aria-label="Datum display"><svg class="i"><use href="#datums"/></svg></button>
      <button class="on" aria-label="Annotation display"><svg class="i"><use href="#annot"/></svg></button>
      <button aria-label="Spin center"><svg class="i"><use href="#spin"/></svg></button>
      <button aria-label="Simulate"><svg class="i"><use href="#sim"/></svg></button>
      <button aria-label="Pause"><svg class="i"><use href="#pause"/></svg></button>
      <button aria-label="Resume"><svg class="i"><use href="#stop"/></svg></button>
    </div>
  </section>
</main>

<footer class="status">
  <button class="sb pressed" aria-label="Navigator"><svg class="i"><use href="#nav"/></svg></button>
  <button class="sb" aria-label="Browser"><svg class="i"><use href="#globe"/></svg></button>
  <button class="sb" aria-label="Full screen"><svg class="i"><use href="#blank"/></svg></button>
  <p class="msg">Layer statuses changed successfully. Repaint to see the results.</p>
  <div class="sright">
    <button class="sb find" aria-label="Find"><svg class="i"><use href="#bino"/></svg><span class="caret"></span></button>
    <button class="sb box" aria-label="Box select"><svg class="i"><use href="#dash"/></svg><span class="caret"></span></button>
    <span class="sel"><svg class="i"><use href="#pick"/></svg>2 selected</span>
    <div class="combo"><select aria-label="Selection filter"><option>Geometry</option></select><span class="caret"></span></div>
  </div>
</footer>

<div class="menu" role="menu">
  <button disabled>Show In Model</button>
  <button disabled>Hide In Model</button>
  <hr>
  <button>Show</button>
  <button disabled>Hide</button>
  <hr>
  <button>Activate</button>
  <button disabled>Deactivate</button>
  <hr>
  <button>New Layer...</button>
  <button>Copy Layer</button>
  <button disabled>Paste Layer</button>
  <button>Delete Layer</button>
  <button disabled>Rename</button>
  <button>Layer Properties...</button>
  <hr>
  <button disabled>Cut Item</button>
  <button>Copy Item</button>
  <button disabled>Paste Item</button>
  <button disabled>Remove Item</button>
  <hr>
  <button>Select Items</button>
  <button>Select Layers</button>
  <button>Layer Info</button>
  <button>Search...</button>
  <hr>
  <button disabled>Save ...</button>
  <button class="hot">Save Status</button>
  <button>Reset Status</button>
</div>
<svg class="pointer" viewBox="0 0 28 42" aria-hidden="true"><path d="M2 2v30l7-6 6 12c2 3 7 1 6-3l-5-11h9z" fill="#f4f4f4" stroke="#000" stroke-width="2.500" stroke-linejoin="round"/></svg>
</body>
</html>
```
FILE: styles.css
```css
* { box-sizing: border-box; }
html, body { height: 100%; }
body {
  margin: 0;
  display: flex;
  flex-direction: column;
  min-height: 100vh;
  overflow: hidden;
  position: relative;
  background: #fff;
  color: #4a4a4a;
  font-family: "Noto Sans", "Open Sans", sans-serif;
  font-size: 14px;
  line-height: 18px;
}
button, input, select { font: inherit; color: inherit; }
button {
  display: flex;
  align-items: center;
  margin: 0;
  padding: 0;
  border: 0;
  background: none;
  white-space: nowrap;
}
.sprite { position: absolute; width: 0; height: 0; }
.i { flex: none; width: 20px; height: 20px; display: block; }
.i.small { width: 16px; height: 16px; }
.i40 { flex: none; width: 40px; height: 40px; display: block; }
.tan { color: #94753d; }
.grey { color: #b0b0b0; }
.tanl { color: #d3ccb9; }
.darkl { color: #808080; }
.off { color: #aaa; }
.caret {
  flex: none;
  width: 0;
  height: 0;
  border: 5px solid transparent;
  border-top: 6px solid #666;
  border-bottom: 0;
}
.off .caret { border-top-color: #aaa; }
.caret.large { border-width: 9px 5px 0; border-top-color: #808080; }
.caret.barred { position: relative; }
.caret.barred::before { content: ""; position: absolute; left: -5px; top: -9px; width: 10px; height: 2px; background: #444; }

/* title bar */
.titlebar { flex: none; display: flex; align-items: center; height: 35px; padding: 0 10px; background: #fbfbfb; position: relative; }
.logo { margin-left: 5px; width: 67px; font: 24px/30px Lato, sans-serif; color: #555; padding-bottom: 3px; }
.logo sup { font-size: 14px; line-height: 1; }
.quick { display: flex; align-items: center; gap: 10px; margin-left: 7px; }
.qb { color: #555; height: 28px; }
.qb.split { gap: 8px; }
.qb.off { color: #aaa; }
.custom { border-left: 1px solid #ccc; padding-left: 8px; margin-left: -2px; padding-top: 4px; height: 30px; }
.title { position: absolute; left: 0; right: 0; margin: 0; text-align: center; font-size: 15px; font-weight: 400; pointer-events: none; }
.winctl { display: flex; gap: 18px; margin-left: auto; margin-right: 3px; }

/* ribbon tabs */
.tabs { flex: none; display: flex; height: 34px; background: #3f4649; color: #f4f4f4; font-size: 15px; }
.tab { padding: 0 30px; }
.tab.file { padding: 0 24px; background: linear-gradient(160deg, #62cf3b, #4fa832); }
.tab.active { background: #fff; color: #3d8f1f; }
.tabtools { display: flex; align-items: center; gap: 12px; margin-left: auto; padding: 0 10px 4px 0; }
.learn { gap: 10px; }
.tabtools .caret { border-top-color: #fff; }
.help { font-weight: 700; font-size: 16px; margin-left: 4px; }

/* ribbon */
.ribbon { flex: none; display: flex; height: 133px; background: #fff; border-bottom: 2px solid #ccdcd6; }
.group {
  flex: none;
  display: flex;
  flex-direction: column;
  background: linear-gradient(#cdd3d3, #cdd3d3) right 2px / 1px 128px no-repeat;
}
.cols { display: flex; flex: none; height: 100px; padding-left: 8px; }
.col { display: flex; flex-direction: column; }
.cmd { height: 33px; gap: 5px; }
.cmd .caret { margin-left: 4px; }
.big { flex-direction: column; line-height: 19px; padding-top: 7px; text-align: center; }
.big span:nth-child(2) { margin-top: 11px; }
.big .caret { margin-top: 4px; }
.glabel { justify-content: center; gap: 5px; height: 31px; padding-top: 4px; }
.g-ops { width: 140px; }
.g-ops .col { margin-left: 9px; }
.g-data { width: 182px; }
.g-body { width: 174px; }
.g-datum { width: 273px; }
.c-datum { width: 161px; margin-left: 11px; }
.g-shapes { width: 185px; }
.g-shapes .col { margin-left: 9px; }
.g-eng { width: 203px; }
.c-eng { width: 110px; }
.g-edit { width: 451px; }
.c-e1 { width: 77px; margin-left: 10px; }
.c-e2 { width: 91px; }
.c-e3 { width: 88px; }
.g-surf { width: 175px; }
.g-surf .col { margin-left: 9px; }
.g-int { width: 112px; }
.g-int .cols { justify-content: center; padding: 0 4px 0 0; }

/* workspace */
.work { flex: 1; display: flex; min-height: 0; background: #e8e9ed; }
.side { flex: none; width: 334px; display: flex; flex-direction: column; background: #fff; overflow: hidden; }
.sidetabs { flex: none; display: flex; height: 33px; background: #e7ebeb; }
.stab { width: 40px; justify-content: center; }
.stab.on { background: #fff; padding-left: 4px; }
.tbar { flex: none; display: flex; align-items: center; height: 40px; padding-left: 18px; }
.cubeicon { margin-left: 6px; }
.dots { width: 3px; height: 18px; margin-left: 6px; background: repeating-linear-gradient(#aaa 0 2px, transparent 2px 5px); }
.tb { height: 30px; padding: 0 6px; }
.tb.first { margin-left: 24px; padding-right: 3px; }
.pressed { background: #dedfe2; border: 1px solid #b4b4b4; padding: 0 4px; }
.tb.ruled { position: relative; margin-left: 10px; }
.tb.ruled::before { content: ""; position: absolute; left: -6px; top: 0; bottom: 0; width: 1px; background: #ccc; }
.chev { width: 42px; padding-left: 24px; font-size: 20px; }
.filter { flex: none; display: flex; align-items: center; height: 34px; padding-left: 15px; gap: 5px; }
.fbox { display: flex; width: 234px; height: 34px; border: 1px solid #b9cbc9; }
.fbox input { flex: 1; min-width: 0; border: 0; outline: 0; }
.fbox button { width: 26px; justify-content: center; color: #888; font-size: 14px; }
.tree { flex: none; list-style: none; margin: 0; padding: 0; }
.tree li { display: flex; align-items: center; gap: 6px; padding-left: 18px; position: relative; }
.tree li.root { padding-left: 14px; }
.hid { color: #b5ab94; }
.node { width: 14px; align-self: stretch; flex: none; background: linear-gradient(#ccc, #ccc) 6px 0 / 1px 100% no-repeat, linear-gradient(#ccc, #ccc) 6px 50% / 10px 1px no-repeat; }
.node.more { background: linear-gradient(#ccc, #ccc) 6px 0 / 1px 5px no-repeat; display: flex; align-items: center; padding-left: 3px; }
.node.more::before { content: ""; border: 5px solid transparent; border-left: 6px solid #555; border-right: 0; }
.model { display: grid; grid-auto-rows: 1fr; height: 158px; margin-top: 6px; }
.insert { flex: none; height: 2px; margin: 7px 0 0 14px; background: #5fcf45; position: relative; }
.insert::before { content: ""; position: absolute; left: 0; top: -3px; border: 4px solid transparent; border-left: 4px solid #5fcf45; border-right: 0; }
.layerpane { flex: 1; display: flex; flex-direction: column; margin-top: 150px; margin-left: 10px; border-top: 3px solid #e7ebeb; }
.layerpane .tbar { padding-left: 8px; }
.layerpane .tb.first { margin-left: 28px; }
.active-obj { flex: none; display: flex; height: 30px; border: 1px solid #d3d3d3; border-right: 0; background: #f6f6f6; }
.active-obj button { width: 30px; padding-left: 4px; background: #eee; border-right: 1px solid #d3d3d3; }
.active-obj input { flex: 1; min-width: 0; border: 0; padding: 0 10px; background: none; color: #aaa; }
.lay li { height: 25px; padding-left: 8px; gap: 12px; }
.lay li .node { margin-right: -6px; }
.lay li.root { padding-left: 4px; }
mark { background: #ade2fd; color: #333; padding: 2px 2px 1px 1px; margin-left: -1px; }

/* graphics area */
.view { flex: 1; position: relative; min-width: 0; display: flex; }
.scene { width: 100%; height: 100%; }
.cs text { font: 15px "Liberation Sans", Arial, sans-serif; fill: #10c010; }
.vtools { position: absolute; top: 9px; left: 50%; transform: translateX(-50%); display: flex; align-items: center; justify-content: space-between; width: 526px; height: 40px; padding: 0 4px; background: #fff; border: 1px solid #c2d2cf; }
.vtools button { width: 29px; height: 30px; justify-content: center; position: relative; }
.vtools .on { background: #dedfe2; border: 1px solid #b4b4b4; }
.drop::after { content: ""; position: absolute; right: 1px; bottom: 1px; border: 2px solid #666; border-top-color: transparent; border-left-color: transparent; }

/* status bar */
.status { flex: none; display: flex; align-items: center; height: 42px; padding: 0 23px 0 8px; border-top: 1px solid #b3c3c6; background: #fff; }
.sb { height: 30px; margin-right: 10px; gap: 8px; }
.sb.pressed { padding: 0 3px; margin-right: 8px; }
.msg { display: flex; align-items: center; margin: 0 0 0 5px; padding-left: 9px; height: 30px; border-left: 1px solid #ccc; }
.msg::before { content: ""; width: 6px; height: 6px; border-radius: 3px; background: #1b678b; margin-right: 6px; }
.sright { display: flex; align-items: center; margin-left: auto; }
.find { height: 32px; padding-left: 7px; border-left: 1px solid #ccc; box-shadow: -6px 0 0 #fff, -7px 0 0 #ccc; margin-right: 7px; }
.box { height: 32px; padding-left: 7px; border-left: 1px solid #ccc; }
.sel { display: flex; align-items: center; gap: 10px; }
.combo { display: flex; align-items: center; position: relative; width: 206px; height: 29px; margin-left: 41px; border: 1px solid #aaa; background: #f7f7f7; }
.combo select { appearance: none; width: 100%; height: 100%; padding: 0 9px; border: 0; background: none; }
.combo .caret { position: absolute; right: 4px; top: 11px; }
.combo::after { content: ""; position: absolute; right: 18px; top: 0; bottom: 0; width: 1px; background: #aaa; }

/* context menu */
.menu { position: absolute; left: 279px; top: 78px; width: 187px; border: 1px solid #999; background: linear-gradient(90deg, #fafafa 29px, #e3e3e3 29px 30px, #fff 30px); box-shadow: 4px 4px 3px -1px #777; }
.menu button { width: 100%; height: 26px; padding-left: 37px; }
.menu button:disabled { color: #aaa; }
.menu .hot { background: #d0f1fd; }
.menu hr { height: 1px; margin: 5px 3px 5px 33px; border: 0; background: #ddd; }
.pointer { position: absolute; left: 328px; top: 713px; width: 28px; height: 42px; }
```
